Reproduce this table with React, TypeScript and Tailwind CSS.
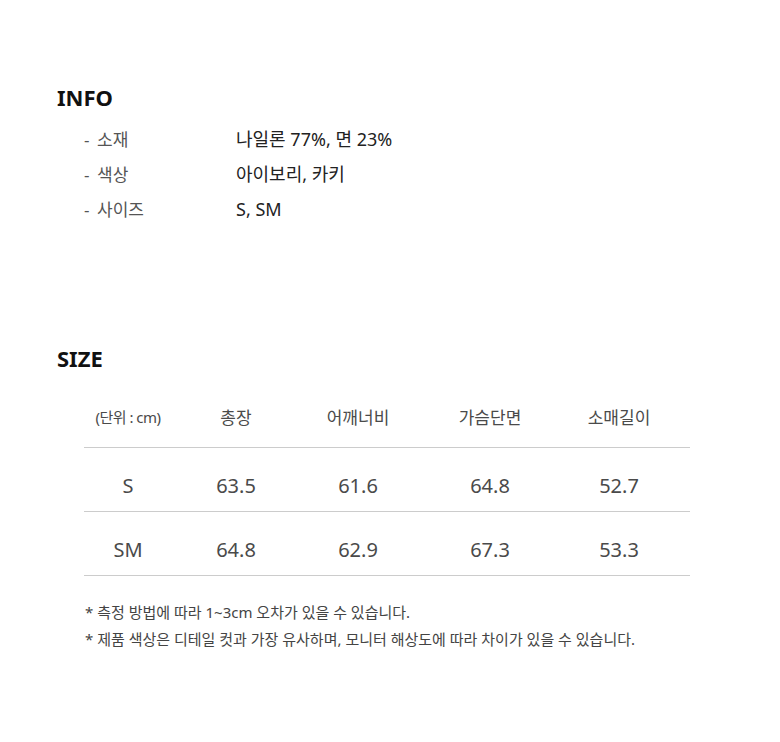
import clsx from "clsx";

const font = {
  fontFamily: '"Noto Sans", "Noto Sans CJK KR", sans-serif',
};

const info = [
  { label: "소재", value: "나일론 77%, 면 23%" },
  { label: "색상", value: "아이보리, 카키" },
  { label: "사이즈", value: "S, SM" },
];

const sizes = [
  { name: "S", values: ["63.5", "61.6", "64.8", "52.7"] },
  { name: "SM", values: ["64.8", "62.9", "67.3", "53.3"] },
];

const headers = ["총장", "어깨너비", "가슴단면", "소매길이"];

// 열 너비 (첫 열 = 사이즈명)
const cols = "grid grid-cols-[88px_128px_116px_148px_110px]";

export default function App() {
  return (
    <div
      className="w-[780px] h-[742px] bg-white pt-[84px] pl-[57px] text-[#222]"
      style={font}
    >
      {/* INFO */}
      <h2 className="text-[22px] font-bold leading-[26px] text-[#111]">INFO</h2>
      <ul className="mt-[12px] pl-[27px]">
        {info.map((row) => (
          <li key={row.label} className="flex items-center h-[35px]">
            <span className="w-[152px] text-[17px] text-[#555]">
              <span className="inline-block w-[13px]">-</span>
              {row.label}
            </span>
            <span className="text-[18px] text-[#222]">{row.value}</span>
          </li>
        ))}
      </ul>

      {/* SIZE */}
      <h2 className="mt-[118px] text-[22px] font-bold leading-[26px] text-[#111]">
        SIZE
      </h2>
      <div className="mt-[17px] ml-[27px] w-[606px] text-[#4a4a4a]">
        <div className={clsx(cols, "h-[60px] items-center border-b border-[#ccc]")}>
          <span className="text-center text-[15px] tracking-[-0.5px]">(단위 : cm)</span>
          {headers.map((h) => (
            <span key={h} className="text-center text-[17px]">
              {h}
            </span>
          ))}
        </div>
        {sizes.map((s) => (
          <div
            key={s.name}
            className={clsx(cols, "h-[64px] pt-[12px] items-center border-b border-[#ccc]")}
          >
            <span className="text-center text-[20px]">{s.name}</span>
            {s.values.map((v, i) => (
              <span key={i} className="text-center text-[20px]">
                {v}
              </span>
            ))}
          </div>
        ))}
      </div>

      {/* 안내 문구 */}
      <div className="mt-[23px] ml-[28px] text-[15px] leading-[27px] text-[#444]">
        <p>* 측정 방법에 따라 1~3cm 오차가 있을 수 있습니다.</p>
        <p>* 제품 색상은 디테일 컷과 가장 유사하며, 모니터 해상도에 따라 차이가 있을 수 있습니다.</p>
      </div>
    </div>
  );
}
